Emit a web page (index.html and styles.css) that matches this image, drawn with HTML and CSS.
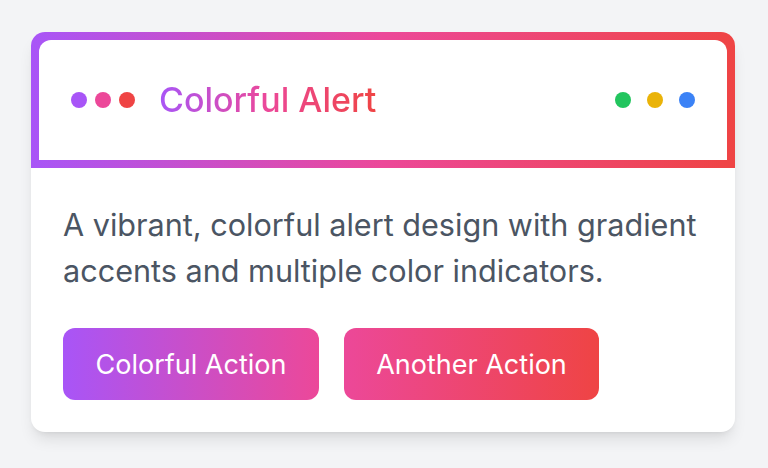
FILE: index.html
```html
<!DOCTYPE html>
<html lang="en">
<head>
<meta charset="utf-8">
<title>Colorful Alert</title>
<link rel="stylesheet" href="styles.css">
</head>
<body>
<div class="card">
  <div class="frame">
    <div class="header">
      <div class="left">
        <div class="dots">
          <span class="dot purple"></span>
          <span class="dot pink"></span>
          <span class="dot red"></span>
        </div>
        <h2 class="title">Colorful Alert</h2>
      </div>
      <div class="dots wide">
        <span class="dot green"></span>
        <span class="dot yellow"></span>
        <span class="dot blue"></span>
      </div>
    </div>
  </div>
  <div class="body">
    <p class="text">A vibrant, colorful alert design with gradient accents and multiple color indicators.</p>
    <div class="actions">
      <button class="btn btn-a">Colorful Action</button>
      <button class="btn btn-b">Another Action</button>
    </div>
  </div>
</div>
</body>
</html>
```
FILE: styles.css
```css
* { box-sizing: border-box; }
html, body { margin: 0; }
body {
  background: #f3f4f6;
  padding: 32px 33px 32px 31px;
  font-family: Inter, "Noto Sans", sans-serif;
}
.card {
  background: #fff;
  border-radius: 14px;
  overflow: hidden;
  box-shadow: 0 10px 15px -3px rgba(0,0,0,0.1), 0 4px 6px -4px rgba(0,0,0,0.1);
}
.frame {
  background: linear-gradient(90deg, #a855f7, #ec4899, #ef4444);
  padding: 8px;
}
.header {
  background: #fff;
  border-radius: 12px 12px 0 0;
  height: 120px;
  padding: 0 32px;
  display: flex;
  align-items: center;
  justify-content: space-between;
}
.left { display: flex; align-items: center; gap: 24px; }
.dots { display: flex; gap: 8px; }
.dots.wide { gap: 16px; }
.dot { width: 16px; height: 16px; border-radius: 50%; display: block; }
.purple { background: #a855f7; }
.pink { background: #ec4899; }
.red { background: #ef4444; }
.green { background: #22c55e; }
.yellow { background: #eab308; }
.blue { background: #3b82f6; }
.title {
  margin: 0;
  font-size: 34px;
  line-height: 40px;
  font-weight: 500;
  background: linear-gradient(90deg, #a855f7, #ec4899, #ef4444);
  -webkit-background-clip: text;
  background-clip: text;
  color: transparent;
}
.body { padding: 34px 32px 32px; }
.text {
  margin: 0 0 34px;
  color: #4b5563;
  font-size: 30.6px;
  line-height: 46px;
}
.actions { display: flex; gap: 25px; }
.btn {
  border: 0;
  color: #fff;
  font-family: inherit;
  font-size: 27px;
  height: 72px;
  padding: 0;
  border-radius: 12px;
  width: 256px;
}
.btn-a { background: linear-gradient(90deg, #a855f7, #ec4899); }
.btn-b { background: linear-gradient(90deg, #ec4899, #ef4444); width: 255px; }
```
